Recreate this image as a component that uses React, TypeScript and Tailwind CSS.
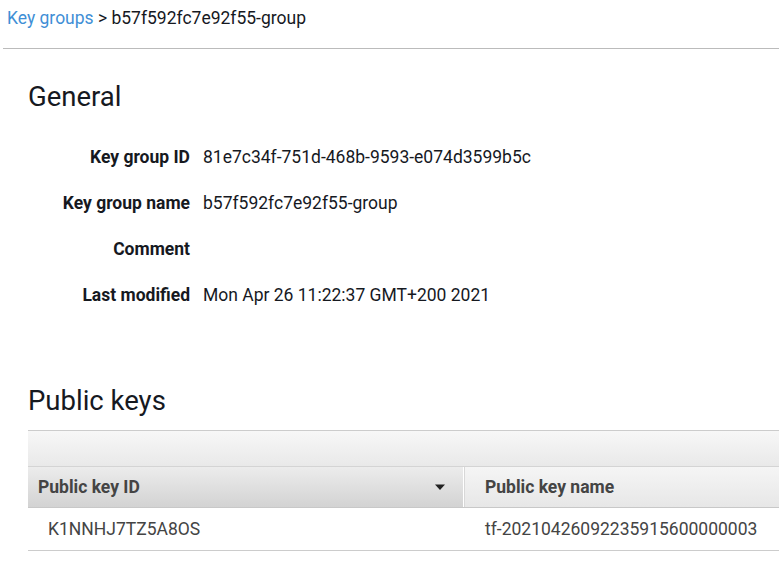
const rows: [string, string][] = [
  ["Key group ID", "81e7c34f-751d-468b-9593-e074d3599b5c"],
  ["Key group name", "b57f592fc7e92f55-group"],
  ["Comment", ""],
  ["Last modified", "Mon Apr 26 11:22:37 GMT+200 2021"],
];

export default function App() {
  return (
    <div className="w-[779px] h-[565px] overflow-hidden bg-white text-[#16191f] font-['Roboto',sans-serif]">
      <div className="h-[49px] border-b border-[#bbbbbb] ml-[3px] pl-[4px] pt-[7px] text-[17.5px] leading-[22px]">
        <span className="text-[#3f8fd6]">Key groups</span>
        <span className="text-[#16191f]"> &gt; b57f592fc7e92f55-group</span>
      </div>

      <div className="pl-[28px]">
        <h2 className="mt-[32px] text-[27.5px] leading-[32px] text-[#16191f]">General</h2>
        <div className="mt-[21px] flex flex-col">
          {rows.map(([label, value]) => (
            <div key={label} className="flex h-[46px] items-center text-[17.5px]">
              <div className="w-[162px] text-right font-bold">{label}</div>
              <div className="ml-[13px]">{value}</div>
            </div>
          ))}
        </div>

        <h2 className="mt-[67px] text-[27.5px] leading-[32px]">Public keys</h2>

        <div className="mt-[13px] border-t border-[#cccccc]">
          <div className="h-[35px] bg-gradient-to-b from-[#f7f7f7] to-[#e9e9e9]"></div>
          <div className="flex h-[42px] border-t border-[#d4d4d4] border-b border-b-[#c8c8c8] text-[17.5px] font-bold text-[#444444]">
            <div className="w-[435px] flex items-center justify-between pl-[10px] pr-[17px] bg-gradient-to-b from-[#ececec] to-[#d3d3d3]">
              <span>Public key ID</span>
              <svg width="12" height="7" viewBox="0 0 12 7">
                <path d="M1 0.5 L11 0.5 L6 6 Z" fill="#222" />
              </svg>
            </div>
            <div className="w-[1px] bg-white"></div>
            <div className="w-[1px] bg-[#d8d8d8]"></div>
            <div className="flex-1 flex items-center pl-[20px] bg-gradient-to-b from-[#f5f5f5] to-[#e7e7e7]">
              Public key name
            </div>
          </div>
          <div className="flex h-[43px] items-center border-b border-[#cccccc] text-[17.5px] text-[#444444]">
            <div className="w-[437px] pl-[20px]">K1NNHJ7TZ5A8OS</div>
            <div className="pl-[20px]">tf-20210426092235915600000003</div>
          </div>
        </div>
      </div>
    </div>
  );
}
